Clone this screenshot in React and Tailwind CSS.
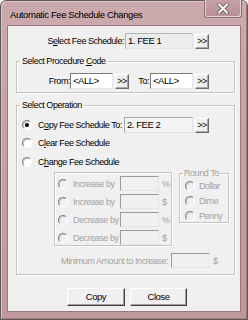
import React from "react";

const Radio = ({ checked = false, disabled = false }) => (
  <span
    className={`shrink-0 w-[10px] h-[10px] rounded-full border border-t-[#808080] border-l-[#808080] border-b-[#ffffff] border-r-[#ffffff] shadow-[inset_1px_1px_0_#c8c8c8] flex items-center justify-center ${
      disabled ? "bg-[#f0f0f0]" : "bg-white"
    }`}
  >
    {checked && <span className="w-[4px] h-[4px] rounded-full bg-black" />}
  </span>
);

const ArrowBtn = () => (
  <button className="shrink-0 ml-[2px] w-[14px] h-[15px] bg-[#f0f0f0] border border-t-white border-l-white border-b-[#6a6a6a] border-r-[#6a6a6a] shadow-[inset_-1px_-1px_0_#a8a8a8] text-[9px] leading-[12px] text-black flex items-center justify-center tracking-[-0.5px]">
    &gt;&gt;
  </button>
);

const Field = ({ value = "", w, variant = "white", h = "h-[16px]" }) => {
  const cls =
    variant === "white"
      ? "bg-white border-t-[#7a7a7a] border-l-[#7a7a7a] border-b-[#e8e8e8] border-r-[#e8e8e8]"
      : variant === "ro"
      ? "bg-[#ececec] border-t-[#b4b4b4] border-l-[#b4b4b4] border-b-[#e2e2e2] border-r-[#e2e2e2]"
      : variant === "ro2"
      ? "bg-[#f4f4f4] border-t-[#a8a8a8] border-l-[#a8a8a8] border-b-[#e2e2e2] border-r-[#e2e2e2]"
      : "bg-[#f0f0f0] border-t-[#9a9a9a] border-l-[#9a9a9a] border-b-[#e4e4e4] border-r-[#e4e4e4]";
  return (
    <div className={`shrink-0 ${w} ${h} border ${cls} px-[2px] text-[9.5px] leading-[14px] text-black whitespace-nowrap overflow-hidden`}>
      {value}
    </div>
  );
};

const dis = "text-[#a2a2a2]";
const groupBorder = "border border-[#c4c4c4] shadow-[inset_1px_1px_0_#fff,1px_1px_0_#fff]";

export default function App() {
  return (
    <div className="w-[248px] h-[320px] bg-[#5a5a5a] p-[1px] rounded-t-[6px] font-['Liberation_Sans',Arial,sans-serif] text-[9px] tracking-[-0.45px] leading-[12px] text-black select-none">
      <div className="w-full h-full flex flex-col rounded-t-[5px] bg-gradient-to-b from-[#cba9ac] to-[#bf989c] px-[6px] pb-[7px] shadow-[inset_1px_1px_0_#dcc3c5,inset_-1px_-1px_0_#a07c80]">
        {/* title bar */}
        <div className="h-[24px] flex items-start shrink-0">
          <div className="pl-[3px] pt-[7px] text-[9.5px] tracking-[-0.4px] leading-[13px] text-black whitespace-nowrap">
            Automatic Fee Schedule Changes
          </div>
          <div className="ml-auto mr-[-1px] mt-[-1px] w-[38px] h-[18px] rounded-b-[3px] border border-[#8e6f72] border-t-0 shadow-[inset_1px_0_0_#e4d0d2,inset_-1px_-1px_0_#e4d0d2] bg-gradient-to-b from-[#c4a0a4] to-[#b89094] flex items-center justify-center">
            <svg width="12" height="11" viewBox="0 0 12 11">
              <path d="M2 1.5 L10 9.5 M10 1.5 L2 9.5" stroke="#555" strokeWidth="3.6" strokeLinecap="square" />
              <path d="M2 1.5 L10 9.5 M10 1.5 L2 9.5" stroke="#fafafa" strokeWidth="2" strokeLinecap="square" />
            </svg>
          </div>
        </div>

        {/* client */}
        <div className="flex-1 border border-[#9b777b] bg-[#f0f0f0] flex flex-col">
          {/* Select fee schedule */}
          <div className="flex items-center mt-[7px]">
            <div className="w-[117px] text-right whitespace-nowrap pr-[1px]">
              S<span className="underline">e</span>lect Fee Schedule:
            </div>
            <Field value="1.  FEE 1" w="w-[68px]" variant="ro" />
            <ArrowBtn />
          </div>

          {/* Procedure code */}
          <fieldset className={`ml-[8px] mr-[5px] mt-[6px] ${groupBorder} pb-[3px] min-w-0`}>
            <legend className="ml-[3px] px-[2px] leading-[12px]">
              Select Procedure <span className="underline">C</span>ode
            </legend>
            <div className="flex items-center mt-[6px]">
              <div className="w-[53px] text-right">From:</div>
              <Field value="<ALL>" w="w-[43px]" />
              <ArrowBtn />
              <div className="w-[21px] text-right pr-[1px]">To:</div>
              <Field value="<ALL>" w="w-[43px]" />
              <ArrowBtn />
            </div>
          </fieldset>

          {/* Operation */}
          <fieldset className={`ml-[8px] mr-[5px] mt-[6px] ${groupBorder} pb-[6px] min-w-0`}>
            <legend className="ml-[3px] px-[2px] leading-[12px]">Select Operation</legend>

            <div className="flex items-center h-[16px] mt-[6px]">
              <div className="ml-[5px]"><Radio checked /></div>
              <div className="ml-[6px] w-[86px] whitespace-nowrap">
                C<span className="underline">o</span>py Fee Schedule To:
              </div>
              <Field value="2.  FEE 2" w="w-[69px]" variant="ro2" />
              <ArrowBtn />
            </div>

            <div className="flex items-center h-[16px] mt-[2px]">
              <div className="ml-[5px]"><Radio /></div>
              <div className="ml-[6px] whitespace-nowrap">
                C<span className="underline">l</span>ear Fee Schedule
              </div>
            </div>

            <div className="flex items-center h-[13px] mt-[4px]">
              <div className="ml-[5px]"><Radio /></div>
              <div className="ml-[6px] whitespace-nowrap">
                C<span className="underline">h</span>ange Fee Schedule
              </div>
            </div>

            <div className="flex items-start">
              {/* change options */}
              <div className={`ml-[37px] mt-[4px] w-[118px] h-[74px] ${groupBorder} flex flex-col gap-[3px] pt-[3px]`}>
                {[
                  ["Increase by", "%"],
                  ["Increase by", "$"],
                  ["Decrease by", "%"],
                  ["Decrease by", "$"],
                ].map(([t, s], i) => (
                  <div key={i} className="flex items-center h-[15px]">
                    <div className="ml-[3px]"><Radio disabled /></div>
                    <div className={`ml-[5px] w-[47px] whitespace-nowrap ${dis}`}>{t}</div>
                    <Field w="w-[39px]" h="h-[15px]" variant="dis" />
                    <div className={`ml-[3px] ${dis}`}>{s}</div>
                  </div>
                ))}
              </div>

              {/* round to */}
              <fieldset className={`ml-[7px] w-[50px] ${groupBorder} pt-[2px] min-w-0 flex flex-col gap-[3px]`}>
                <legend className={`ml-[3px] px-[1px] leading-[10px] ${dis}`}>Round To</legend>
                {["Dollar", "Dime", "Penny"].map((t) => (
                  <div key={t} className="flex items-center h-[12px]">
                    <div className="ml-[5px]"><Radio disabled /></div>
                    <div className={`ml-[4px] ${dis}`}>{t}</div>
                  </div>
                ))}
              </fieldset>
            </div>

            <div className="flex items-center mt-[7px]">
              <div className={`w-[154px] text-right pr-[3px] whitespace-nowrap ${dis}`}>
                Minimum Amount to Increase:
              </div>
              <Field w="w-[39px]" h="h-[15px]" variant="dis" />
              <div className={`ml-[3px] ${dis}`}>$</div>
            </div>
          </fieldset>

          {/* buttons */}
          <div className="flex mt-[13px] ml-[59px] gap-[5px]">
            <button className="w-[58px] h-[18px] bg-[#f0f0f0] border border-t-white border-l-white border-b-[#404040] border-r-[#404040] shadow-[inset_-1px_-1px_0_#a0a0a0] text-[9.5px] leading-[12px] text-black">
              Copy
            </button>
            <button className="w-[57px] h-[18px] bg-[#f0f0f0] border border-t-white border-l-white border-b-[#404040] border-r-[#404040] shadow-[inset_-1px_-1px_0_#a0a0a0] text-[9.5px] leading-[12px] text-black">
              Close
            </button>
          </div>
        </div>
      </div>
    </div>
  );
}
